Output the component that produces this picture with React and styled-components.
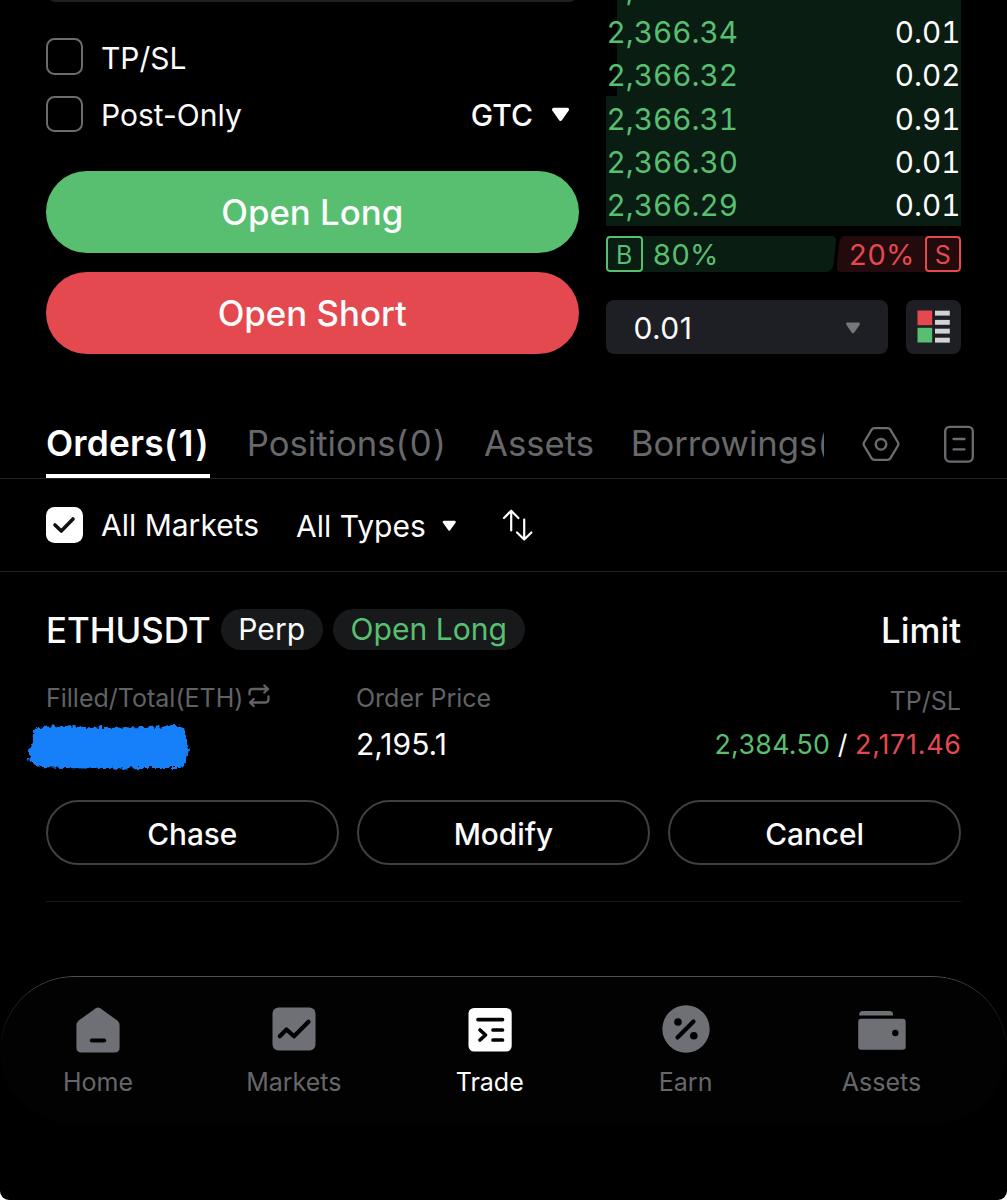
import React from 'react';
import styled, { createGlobalStyle, css } from 'styled-components';

const colors = {
  green: '#58bf71',
  red: '#e3494f',
  bidBg: '#0a1d13',
  askBg: '#220a0d',
  field: '#1e1f24',
  line: '#202022',
  outline: '#404042',
  muted: '#67686b',
  label: '#616265',
  icon: '#6e7076',
  check: '#6b6c70',
  white: '#fcfcfc',
};

const GlobalStyle = createGlobalStyle`
  * { box-sizing: border-box; }
  body {
    margin: 0;
    background: #fff;
    font-family: Inter, "Liberation Sans", sans-serif;
    color: ${colors.white};
  }
  button {
    margin: 0;
    padding: 0;
    border: 0;
    background: none;
    color: inherit;
    font: inherit;
  }
  svg { display: block; flex: none; }
`;

const Screen = styled.div`
  display: flex;
  flex-direction: column;
  width: 1007px;
  height: 1200px;
  overflow: hidden;
  background: #000;
  border-radius: 0 0 9px 9px;
`;

/* order form + order book */

const TradePanel = styled.section`
  display: grid;
  grid-template-columns: 532.5px 355px;
  column-gap: 27.5px;
  height: 354px;
  padding-left: 46px;
`;
const Form = styled.div`
  display: flex;
  flex-direction: column;
  justify-content: flex-end;
  overflow: hidden;
`;
const Field = styled.div`
  flex: none;
  height: 60px;
  border-radius: 10px;
  background: ${colors.field};
`;
const FormOptions = styled.div`
  display: flex;
  flex-direction: column;
  gap: 20.7px;
  padding: 36.6px 0 39px;
`;
const OptionRow = styled.div`
  display: flex;
  align-items: center;
  height: 36.5px;
`;
const CheckBox = styled.span`
  display: flex;
  flex: none;
  align-items: center;
  justify-content: center;
  width: 36.5px;
  height: 36.5px;
  border-radius: 8.5px;
  ${({ $checked }) => $checked
    ? css`background: #fff;`
    : css`border: 2px solid ${colors.check};`}
`;
const OptionLabel = styled.span`
  padding: ${({ $drop }) => $drop || 0}px 0 0 18.5px;
  font-size: 30px;
  line-height: 34px;
`;
const TimeInForce = styled.button`
  display: flex;
  align-items: center;
  gap: 18px;
  margin: 2px 8.5px 0 auto;
  font-size: 30px;
  font-weight: 500;
`;
const SubmitButton = styled.button`
  flex: none;
  height: 82px;
  margin-top: ${({ $spaced }) => $spaced ? 19 : 0}px;
  border-radius: 41px;
  background: ${({ $side }) => $side === 'long' ? colors.green : colors.red};
  font-size: 34.8px;
  font-weight: 500;
  line-height: 82px;
`;

const Book = styled.div`
  display: flex;
  flex-direction: column;
  justify-content: flex-end;
  overflow: hidden;
`;
const BookRow = styled.div`
  position: relative;
  z-index: 0;
  display: flex;
  flex: none;
  align-items: center;
  justify-content: space-between;
  height: 43.3px;
  padding: 1.5px 0.5px 0;
  font-size: 29.7px;
  font-feature-settings: "tnum";
  &::before {
    content: '';
    position: absolute;
    z-index: -1;
    inset: 0 0 0 auto;
    width: ${({ $depth }) => $depth}px;
    background: ${colors.bidBg};
  }
`;
const BidPrice = styled.span`
  color: ${colors.green};
`;
const Ratio = styled.div`
  display: flex;
  flex: none;
  justify-content: space-between;
  height: 36.5px;
  margin: 9.5px 0 27.5px;
`;
const RatioBar = styled.div`
  display: flex;
  align-items: center;
  justify-content: ${({ $side }) => $side === 'buy' ? 'flex-start' : 'flex-end'};
  gap: 10px;
  width: ${({ $side }) => $side === 'buy' ? 230 : 124.5}px;
  color: ${({ $side }) => $side === 'buy' ? colors.green : colors.red};
  background: ${({ $side }) => $side === 'buy' ? colors.bidBg : colors.askBg};
  clip-path: ${({ $side }) => $side === 'buy'
    ? 'path("M4 0H224Q230.500 0 230 5.500L227.500 29Q226 36.500 219 36.500H4Q0 36.500 0 32.500V4Q0 0 4 0Z")'
    : 'path("M10 0H120.500Q124.500 0 124.500 4V32.500Q124.500 36.500 120.500 36.500H5Q-0.500 36.500 0.300 30.500L2.800 6.500Q4 0 10 0Z")'};
  font-size: 29px;
  font-feature-settings: "tnum";
`;
const Percent = styled.span`
  padding-top: 1px;
`;
const SideTag = styled.span`
  width: 36.5px;
  height: 36.5px;
  border: 2px solid currentColor;
  border-radius: 4px;
  font-size: 25px;
  line-height: 34px;
  text-align: center;
`;
const BookTools = styled.div`
  display: flex;
  flex: none;
  justify-content: space-between;
  height: 54.5px;
`;
const TickSelect = styled.button`
  display: flex;
  align-items: center;
  justify-content: space-between;
  width: 282px;
  padding: 2px 27px 0 27.5px;
  border-radius: 8px;
  background: ${colors.field};
  font-size: 30px;
  letter-spacing: 0.4px;
`;
const DepthButton = styled.button`
  display: flex;
  align-items: center;
  justify-content: center;
  width: 55px;
  border-radius: 8px;
  background: ${colors.field};
`;

/* tabs + filters */

const TabBar = styled.nav`
  display: flex;
  align-items: center;
  height: 70px;
  margin-top: 55px;
  padding: 0 33px 0 46px;
  border-bottom: 1px solid ${colors.line};
`;
const Tabs = styled.div`
  display: flex;
  gap: 36.7px;
  width: 778px;
  overflow: hidden;
`;
const Tab = styled.button`
  position: relative;
  flex: none;
  height: 69px;
  color: ${({ $active }) => $active ? '#fff' : colors.muted};
  font-size: 34.7px;
  line-height: 69px;
  ${({ $active }) => $active && css`
    font-size: 35.3px;
    font-weight: 600;
    letter-spacing: 0.2px;
    &::after {
      content: '';
      position: absolute;
      inset: auto 0 0;
      height: 4.5px;
      background: #fff;
    }
  `}
`;
const TabCount = styled.span`
  letter-spacing: 1.5px;
`;
const TabActions = styled.div`
  display: flex;
  align-items: center;
  gap: 44px;
  margin-left: auto;
`;
const Filters = styled.div`
  display: flex;
  align-items: center;
  height: 93px;
  padding-left: 46px;
  border-bottom: 1px solid ${colors.line};
`;
const TypeFilter = styled.button`
  display: flex;
  align-items: center;
  gap: 16px;
  margin: 0 45.5px 0 37px;
  padding-top: 1px;
  font-size: 30px;
`;

/* order card */

const Card = styled.article`
  height: 330px;
  margin: 0 46px;
  padding-top: 36.5px;
  border-bottom: 1px solid #18181a;
`;
const CardHead = styled.header`
  display: flex;
  align-items: flex-start;
  justify-content: space-between;
  height: 41px;
`;
const HeadLeft = styled.div`
  display: flex;
  gap: 10px;
`;
const Title = styled.h2`
  margin: 1.5px 0 0;
  font-size: 34.8px;
  font-weight: 500;
  line-height: 41px;
`;
const Pill = styled.span`
  height: 41px;
  padding: 0 17.7px;
  border-radius: 21px;
  background: #18191b;
  color: ${({ $green }) => $green ? colors.green : colors.white};
  font-size: 30.1px;
  line-height: 40px;
`;
const Details = styled.div`
  display: grid;
  grid-template-columns: 310px 1fr auto;
  margin-top: 33.5px;
`;
const Detail = styled.div`
  display: flex;
  flex-direction: column;
  align-items: ${({ $end }) => $end ? 'flex-end' : 'flex-start'};
`;
const DetailLabel = styled.span`
  display: flex;
  align-items: center;
  gap: 5px;
  height: 30px;
  padding-top: ${({ $drop }) => $drop || 0}px;
  color: ${colors.label};
  font-size: 25px;
  svg { margin-top: -4px; }
`;
const DetailValue = styled.span`
  height: 42px;
  margin-top: 10px;
  font-size: ${({ $small }) => $small ? 26.8 : 30}px;
  line-height: 42px;
  white-space: nowrap;
`;
const TakeProfit = styled.span`
  color: ${colors.green};
  letter-spacing: 0.3px;
`;
const StopLoss = styled.span`
  margin-right: -0.8px;
  color: ${colors.red};
  letter-spacing: 0.8px;
`;
const Scribble = styled.svg`
  margin: 10px 0 -14px -22px;
`;
const Actions = styled.div`
  display: grid;
  grid-template-columns: repeat(3, 292.5px);
  column-gap: 18.7px;
  margin-top: 35.3px;
`;
const ActionButton = styled.button`
  height: 64.5px;
  padding-top: 2px;
  border: 2px solid ${colors.outline};
  border-radius: 33px;
  font-size: 29.8px;
  font-weight: 500;
`;

/* bottom navigation */

const BottomNav = styled.nav`
  position: relative;
  display: grid;
  grid-template-columns: repeat(5, 195.9px);
  align-content: start;
  height: 148px;
  margin-top: 74px;
  padding-top: 29px;
  border-radius: 74px;
  background: #020202;
  &::before {
    content: '';
    position: absolute;
    inset: 0;
    border: 1px solid #505051;
    border-radius: 74px;
    mask-image: linear-gradient(#000 0, rgba(0, 0, 0, 0.5) 25px, transparent 76px);
  }
`;
const NavItem = styled.a`
  display: flex;
  flex-direction: column;
  align-items: center;
  gap: 13px;
  color: ${({ $active }) => $active ? '#fff' : colors.icon};
`;
const NavLabel = styled.span`
  font-size: 25px;
  line-height: 32px;
  color: ${({ $active }) => $active ? '#fff' : '#66676a'};
`;

function Caret({ width, height, color = '#fff' }) {
  return (
    <svg width={width} height={height} viewBox="0 0 18 14">
      <path
        d="M2.500 2.300H15.500L9 11.500Z"
        fill={color}
        stroke={color}
        strokeWidth="3.200"
        strokeLinejoin="round"
      />
    </svg>
  );
}

const DepthIcon = () => (
  <svg width="33" height="33" viewBox="0 0 33 33">
    <rect x="0.500" y="0.500" width="14.700" height="14.700" fill={colors.red} />
    <rect x="0.500" y="17.800" width="14.700" height="14.700" fill={colors.green} />
    {[0.7, 9.9, 18.7, 27.7].map((y) => (
      <rect key={y} x="18" y={y} width="14.800" height="4.900" fill="#d2d3d5" />
    ))}
  </svg>
);

const HexIcon = () => (
  <svg width="38" height="38" viewBox="0 0 38 38" fill="none" stroke={colors.check} strokeWidth="2.300">
    <path d="M12.500 3.200H25.500Q27.500 3.200 28.500 4.900L36 17.500Q36.800 19 36 20.500L28.500 33.100Q27.500 34.800 25.500 34.800H12.500Q10.500 34.800 9.500 33.100L2 20.500Q1.200 19 2 17.500L9.500 4.900Q10.500 3.200 12.500 3.200Z" />
    <circle cx="19" cy="19.300" r="5.300" />
  </svg>
);

const DocIcon = () => (
  <svg width="30" height="38" viewBox="0 0 30 38" fill="none" stroke={colors.check} strokeWidth="2.300">
    <rect x="1.200" y="1.800" width="27.600" height="34.800" rx="4.500" />
    <path d="M9.500 14H20.500M9.500 24.300H20.500" strokeLinecap="round" />
  </svg>
);

const SortIcon = () => (
  <svg width="32" height="34" viewBox="0 0 32 34" fill="none" stroke="#fff" strokeWidth="2.200" strokeLinecap="round" strokeLinejoin="round">
    <path d="M2 10L9.200 2.700L16.400 10M9.200 3V22.500" />
    <path d="M15 24.500L22.200 31.500L29.400 24.500M22.200 31V11.500" />
  </svg>
);

const CheckIcon = () => (
  <svg width="24" height="18" viewBox="0 0 24 18" fill="none" stroke="#111" strokeWidth="3.600" strokeLinecap="round" strokeLinejoin="round">
    <path d="M3 9L9.300 15L21 3" />
  </svg>
);

const SwapIcon = () => (
  <svg width="22" height="24" viewBox="0 0 22 24" fill="none" stroke={colors.label} strokeWidth="2.300" strokeLinecap="round" strokeLinejoin="round">
    <path d="M1.500 10.500V8.500Q1.500 5 4.500 5H20M16.300 1.500L20 5L16.300 8.500" />
    <path d="M20.500 12.500V15Q20.500 18.500 17.500 18.500H2M5.700 15L2 18.500L5.700 22" />
  </svg>
);

const HomeIcon = () => (
  <svg width="48" height="48" viewBox="0 0 48 48">
    <path d="M21.800 3.200Q24 1.700 26.200 3.200L43 15.300Q45.600 17.500 45.600 20.500V42.500Q45.600 47.500 40.600 47.500H7.400Q2.400 47.500 2.400 42.500V20.500Q2.400 17.500 5 15.300Z" fill="currentColor" />
    <path d="M17.800 35.400H30.200" stroke="#000" strokeWidth="4" strokeLinecap="round" />
  </svg>
);

const MarketsIcon = () => (
  <svg width="48" height="48" viewBox="0 0 48 48">
    <rect x="2.500" y="2.500" width="43" height="43" rx="6" fill="currentColor" />
    <path d="M9.800 31.300L16.500 24.500L24 31.300L38.500 16.800" fill="none" stroke="#000" strokeWidth="4.200" strokeLinecap="round" strokeLinejoin="round" />
  </svg>
);

const TradeIcon = () => (
  <svg width="48" height="48" viewBox="0 0 48 48">
    <rect x="2.500" y="3" width="43.200" height="43.500" rx="5.500" fill="currentColor" />
    <path d="M12 14.600H36.500M27 25H36.500M27 35H36.500M14 25L19.500 30L14 35" fill="none" stroke="#000" strokeWidth="3.700" strokeLinecap="round" strokeLinejoin="round" />
  </svg>
);

const EarnIcon = () => (
  <svg width="48" height="48" viewBox="0 0 48 48">
    <circle cx="24" cy="24" r="23.700" fill="currentColor" />
    <circle cx="16" cy="17" r="3.800" />
    <circle cx="31.800" cy="30.800" r="3.800" />
    <path d="M15.500 32.500L31.500 16.500" stroke="#000" strokeWidth="4.200" strokeLinecap="round" />
  </svg>
);

const WalletIcon = () => (
  <svg width="48" height="48" viewBox="0 0 48 48">
    <path d="M1.200 10.500V9.500Q1.200 6 4.700 6H31.500Q35 6 35 9.500V10.500Z" fill="currentColor" />
    <rect x="0.200" y="13.700" width="47.500" height="31" rx="3" fill="currentColor" />
    <circle cx="37.300" cy="28" r="3.200" />
  </svg>
);

const bids = [
  { price: '2,366.35', amount: '0.01', depth: 344 },
  { price: '2,366.34', amount: '0.01', depth: 344 },
  { price: '2,366.32', amount: '0.02', depth: 344 },
  { price: '2,366.31', amount: '0.91', depth: 355 },
  { price: '2,366.30', amount: '0.01', depth: 355 },
  { price: '2,366.29', amount: '0.01', depth: 355 },
];

const tabs = [
  { label: 'Orders', count: '(1)' },
  { label: 'Positions', count: '(0)' },
  { label: 'Assets' },
  { label: 'Borrowings', count: '(0)' },
];

const navItems = [
  { label: 'Home', Icon: HomeIcon },
  { label: 'Markets', Icon: MarketsIcon },
  { label: 'Trade', Icon: TradeIcon },
  { label: 'Earn', Icon: EarnIcon },
  { label: 'Assets', Icon: WalletIcon },
];

// brush stroke that hides the filled amount
function HiddenAmount() {
  return (
    <Scribble width="168" height="50" viewBox="0 0 168 50">
      <defs>
        <filter id="rough" x="-5%" y="-15%" width="110%" height="130%">
          <feTurbulence type="fractalNoise" baseFrequency="0.2" numOctaves="2" seed="4" />
          <feDisplacementMap in="SourceGraphic" scale="8" xChannelSelector="R" yChannelSelector="G" />
          <feGaussianBlur stdDeviation="0.7" />
        </filter>
      </defs>
      <path
        d="M15 4L40 3L80 5L120 4L153 3Q161 4 162 10L162 20L165 27L162 36Q163 44 155 45L120 45L80 46L40 45L16 44Q6 42 5 34L5 26L8 18L9 10Q10 5 15 4Z"
        fill="#1680fa"
        filter="url(#rough)"
      />
    </Scribble>
  );
}

export default function App() {
  return (
    <>
      <GlobalStyle />
      <Screen>
        <TradePanel>
          <Form>
            <Field />
            <FormOptions>
              <OptionRow>
                <CheckBox />
                <OptionLabel $drop={3}>TP/SL</OptionLabel>
              </OptionRow>
              <OptionRow>
                <CheckBox />
                <OptionLabel $drop={3}>Post-Only</OptionLabel>
                <TimeInForce>
                  GTC
                  <Caret width={19} height={15} />
                </TimeInForce>
              </OptionRow>
            </FormOptions>
            <SubmitButton $side="long">Open Long</SubmitButton>
            <SubmitButton $side="short" $spaced>Open Short</SubmitButton>
          </Form>
          <Book>
            {bids.map(({ price, amount, depth }) => (
              <BookRow key={price} $depth={depth}>
                <BidPrice>{price}</BidPrice>
                <span>{amount}</span>
              </BookRow>
            ))}
            <Ratio>
              <RatioBar $side="buy">
                <SideTag>B</SideTag>
                <Percent>80%</Percent>
              </RatioBar>
              <RatioBar $side="sell">
                <Percent>20%</Percent>
                <SideTag>S</SideTag>
              </RatioBar>
            </Ratio>
            <BookTools>
              <TickSelect>
                0.01
                <Caret width={16} height={12} color="#76777b" />
              </TickSelect>
              <DepthButton>
                <DepthIcon />
              </DepthButton>
            </BookTools>
          </Book>
        </TradePanel>

        <TabBar>
          <Tabs>
            {tabs.map(({ label, count }, i) => (
              <Tab key={label} $active={i === 0}>
                {label}
                {count && <TabCount>{count}</TabCount>}
              </Tab>
            ))}
          </Tabs>
          <TabActions>
            <HexIcon />
            <DocIcon />
          </TabActions>
        </TabBar>

        <Filters>
          <CheckBox $checked>
            <CheckIcon />
          </CheckBox>
          <OptionLabel>All Markets</OptionLabel>
          <TypeFilter>
            All Types
            <Caret width={14.5} height={11.5} />
          </TypeFilter>
          <SortIcon />
        </Filters>

        <Card>
          <CardHead>
            <HeadLeft>
              <Title>ETHUSDT</Title>
              <Pill>Perp</Pill>
              <Pill $green>Open Long</Pill>
            </HeadLeft>
            <Title as="span">Limit</Title>
          </CardHead>
          <Details>
            <Detail>
              <DetailLabel>
                Filled/Total(ETH)
                <SwapIcon />
              </DetailLabel>
              <HiddenAmount />
            </Detail>
            <Detail>
              <DetailLabel>Order Price</DetailLabel>
              <DetailValue>2,195.1</DetailValue>
            </Detail>
            <Detail $end>
              <DetailLabel $drop={5}>TP/SL</DetailLabel>
              <DetailValue $small>
                <TakeProfit>2,384.50</TakeProfit>
                {' / '}
                <StopLoss>2,171.46</StopLoss>
              </DetailValue>
            </Detail>
          </Details>
          <Actions>
            <ActionButton>Chase</ActionButton>
            <ActionButton>Modify</ActionButton>
            <ActionButton>Cancel</ActionButton>
          </Actions>
        </Card>

        <BottomNav>
          {navItems.map(({ label, Icon }) => (
            <NavItem key={label} $active={label === 'Trade'}>
              <Icon />
              <NavLabel $active={label === 'Trade'}>{label}</NavLabel>
            </NavItem>
          ))}
        </BottomNav>
      </Screen>
    </>
  );
}
